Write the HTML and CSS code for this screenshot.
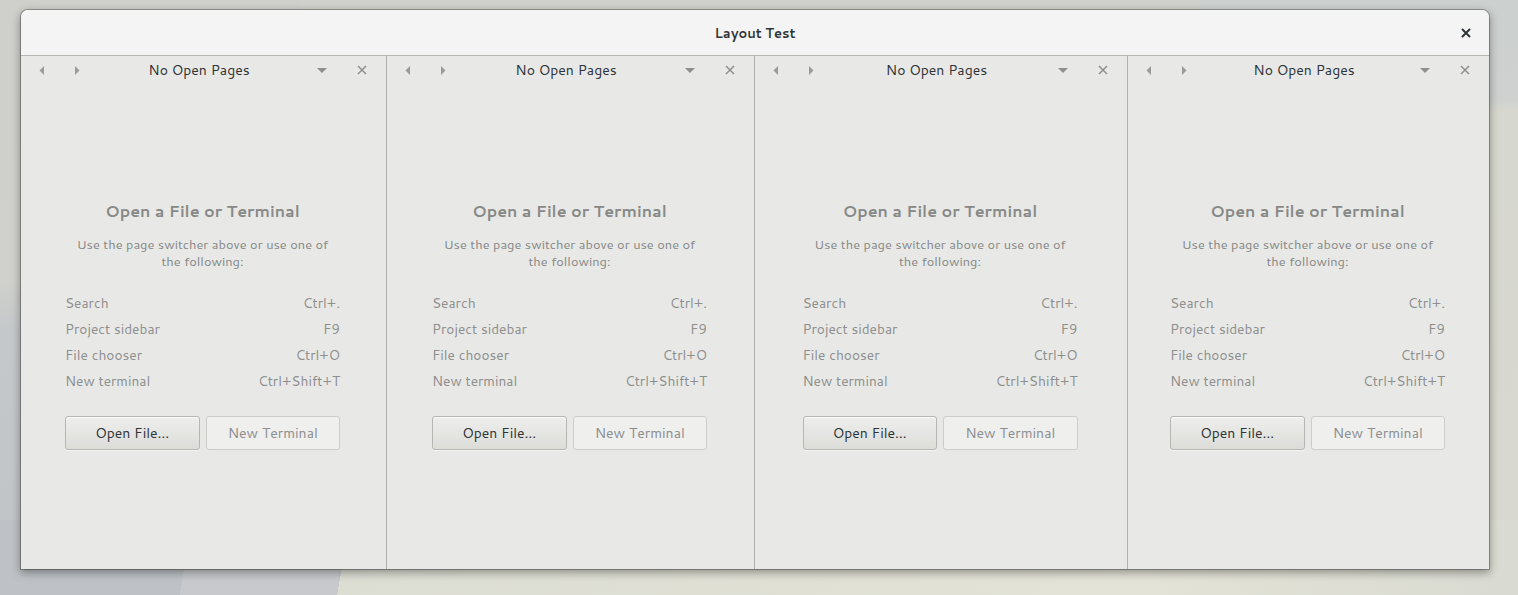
FILE: index.html
```html
<!DOCTYPE html>
<html>
<head>
<meta charset="utf-8">
<title>Layout Test</title>
<link rel="stylesheet" href="styles.css">
</head>
<body>
<div class="desktop">
  <div class="window">
    <header class="titlebar">
      <span class="title">Layout Test</span>
      <button class="win-close" aria-label="Close">
        <svg width="10" height="10" viewBox="0 0 10 10"><path d="M1 1L9 9M9 1L1 9" stroke="#2e3436" stroke-width="2"/></svg>
      </button>
    </header>
    <main class="grid">
      <section class="panel">
        <div class="panel-head">
          <span class="hbtn"><svg width="6" height="9" viewBox="0 0 6 9"><path d="M5 0V9L0.5 4.5Z" fill="#9a9c9c"/></svg></span>
          <span class="hbtn"><svg width="6" height="9" viewBox="0 0 6 9"><path d="M1 0V9L5.5 4.5Z" fill="#9a9c9c"/></svg></span>
          <span class="ptitle">No Open Pages</span>
          <span class="hbtn"><svg width="10" height="5" viewBox="0 0 10 5"><path d="M0 0H10L5 5Z" fill="#8e9090"/></svg></span>
          <span class="hbtn"><svg width="10" height="10" viewBox="0 0 10 10"><path d="M1 1L9 9M9 1L1 9" stroke="#8e9090" stroke-width="1.5"/></svg></span>
        </div>
        <div class="empty">
          <h2 class="etitle">Open a File or Terminal</h2>
          <p class="esub">Use the page switcher above or use one of the following:</p>
          <dl class="keys">
            <div class="krow"><dt>Search</dt><dd>Ctrl+.</dd></div>
            <div class="krow"><dt>Project sidebar</dt><dd>F9</dd></div>
            <div class="krow"><dt>File chooser</dt><dd>Ctrl+O</dd></div>
            <div class="krow"><dt>New terminal</dt><dd>Ctrl+Shift+T</dd></div>
          </dl>
          <div class="actions">
            <button class="btn">Open File…</button>
            <button class="btn btn-disabled">New Terminal</button>
          </div>
        </div>
      </section>
      <section class="panel">
        <div class="panel-head">
          <span class="hbtn"><svg width="6" height="9" viewBox="0 0 6 9"><path d="M5 0V9L0.5 4.5Z" fill="#9a9c9c"/></svg></span>
          <span class="hbtn"><svg width="6" height="9" viewBox="0 0 6 9"><path d="M1 0V9L5.5 4.5Z" fill="#9a9c9c"/></svg></span>
          <span class="ptitle">No Open Pages</span>
          <span class="hbtn"><svg width="10" height="5" viewBox="0 0 10 5"><path d="M0 0H10L5 5Z" fill="#8e9090"/></svg></span>
          <span class="hbtn"><svg width="10" height="10" viewBox="0 0 10 10"><path d="M1 1L9 9M9 1L1 9" stroke="#8e9090" stroke-width="1.5"/></svg></span>
        </div>
        <div class="empty">
          <h2 class="etitle">Open a File or Terminal</h2>
          <p class="esub">Use the page switcher above or use one of the following:</p>
          <dl class="keys">
            <div class="krow"><dt>Search</dt><dd>Ctrl+.</dd></div>
            <div class="krow"><dt>Project sidebar</dt><dd>F9</dd></div>
            <div class="krow"><dt>File chooser</dt><dd>Ctrl+O</dd></div>
            <div class="krow"><dt>New terminal</dt><dd>Ctrl+Shift+T</dd></div>
          </dl>
          <div class="actions">
            <button class="btn">Open File…</button>
            <button class="btn btn-disabled">New Terminal</button>
          </div>
        </div>
      </section>
      <section class="panel">
        <div class="panel-head">
          <span class="hbtn"><svg width="6" height="9" viewBox="0 0 6 9"><path d="M5 0V9L0.5 4.5Z" fill="#9a9c9c"/></svg></span>
          <span class="hbtn"><svg width="6" height="9" viewBox="0 0 6 9"><path d="M1 0V9L5.5 4.5Z" fill="#9a9c9c"/></svg></span>
          <span class="ptitle">No Open Pages</span>
          <span class="hbtn"><svg width="10" height="5" viewBox="0 0 10 5"><path d="M0 0H10L5 5Z" fill="#8e9090"/></svg></span>
          <span class="hbtn"><svg width="10" height="10" viewBox="0 0 10 10"><path d="M1 1L9 9M9 1L1 9" stroke="#8e9090" stroke-width="1.5"/></svg></span>
        </div>
        <div class="empty">
          <h2 class="etitle">Open a File or Terminal</h2>
          <p class="esub">Use the page switcher above or use one of the following:</p>
          <dl class="keys">
            <div class="krow"><dt>Search</dt><dd>Ctrl+.</dd></div>
            <div class="krow"><dt>Project sidebar</dt><dd>F9</dd></div>
            <div class="krow"><dt>File chooser</dt><dd>Ctrl+O</dd></div>
            <div class="krow"><dt>New terminal</dt><dd>Ctrl+Shift+T</dd></div>
          </dl>
          <div class="actions">
            <button class="btn">Open File…</button>
            <button class="btn btn-disabled">New Terminal</button>
          </div>
        </div>
      </section>
      <section class="panel">
        <div class="panel-head">
          <span class="hbtn"><svg width="6" height="9" viewBox="0 0 6 9"><path d="M5 0V9L0.5 4.5Z" fill="#9a9c9c"/></svg></span>
          <span class="hbtn"><svg width="6" height="9" viewBox="0 0 6 9"><path d="M1 0V9L5.5 4.5Z" fill="#9a9c9c"/></svg></span>
          <span class="ptitle">No Open Pages</span>
          <span class="hbtn"><svg width="10" height="5" viewBox="0 0 10 5"><path d="M0 0H10L5 5Z" fill="#8e9090"/></svg></span>
          <span class="hbtn"><svg width="10" height="10" viewBox="0 0 10 10"><path d="M1 1L9 9M9 1L1 9" stroke="#8e9090" stroke-width="1.5"/></svg></span>
        </div>
        <div class="empty">
          <h2 class="etitle">Open a File or Terminal</h2>
          <p class="esub">Use the page switcher above or use one of the following:</p>
          <dl class="keys">
            <div class="krow"><dt>Search</dt><dd>Ctrl+.</dd></div>
            <div class="krow"><dt>Project sidebar</dt><dd>F9</dd></div>
            <div class="krow"><dt>File chooser</dt><dd>Ctrl+O</dd></div>
            <div class="krow"><dt>New terminal</dt><dd>Ctrl+Shift+T</dd></div>
          </dl>
          <div class="actions">
            <button class="btn">Open File…</button>
            <button class="btn btn-disabled">New Terminal</button>
          </div>
        </div>
      </section>
    </main>
  </div>
</div>
</body>
</html>
```
FILE: styles.css
```css
* { box-sizing: border-box; }
html, body { margin: 0; padding: 0; }
body {
  width: 1518px;
  height: 595px;
  overflow: hidden;
  font-family: Cantarell, "Open Sans", "Noto Sans", sans-serif;
}
.desktop {
  width: 1518px;
  height: 595px;
  padding: 10px 0 0 21px;
  background:
    linear-gradient(100deg, #bec2c6 0 190px, #c7c9cc 190px 345px, #dcddd3 345px, #e3e3d7 75%, #d9dad1 100%) 0 520px / 100% 75px no-repeat,
    linear-gradient(to bottom, #cfd0cb 0, #d0d1cc 280px, #c5c8ca 330px, #c2c5c8 520px) 0 0 / 300px 100% no-repeat,
    linear-gradient(to bottom, #ccd0cf 0, #ced1cf 100px, #d6d7cf 110px, #d8d8d0 595px) 1200px 0 / 318px 100% no-repeat,
    #d0d1cc;
}
.window {
  width: 1468px;
  height: 559px;
  border-radius: 7px 7px 0 0;
  background: #e8e8e7;
  box-shadow: 0 0 0 1px rgba(0,0,0,0.28), 0 3px 9px 1px rgba(0,0,0,0.35);
  display: flex;
  flex-direction: column;
  overflow: hidden;
}
.titlebar {
  height: 46px;
  flex: none;
  background: #f4f4f4;
  border-bottom: 1px solid #b6b6b3;
  display: flex;
  align-items: center;
  justify-content: center;
  position: relative;
}
.title {
  font-size: 13px;
  font-weight: 600;
  color: #2e3436;
  margin-top: 1px;
}
.win-close {
  position: absolute;
  right: 13px;
  top: 13px;
  width: 20px;
  height: 20px;
  padding: 0;
  border: 0;
  background: none;
  display: flex;
  align-items: center;
  justify-content: center;
}
.grid {
  flex: 1;
  display: grid;
  grid-template-columns: 365px 368px 373px 362px;
}
.panel {
  display: flex;
  flex-direction: column;
  align-items: center;
  background: #e8e8e7;
}
.panel + .panel { border-left: 1px solid #b0b0ad; }
.panel-head {
  width: 100%;
  height: 28px;
  display: flex;
  align-items: center;
  padding: 0 7px 0 3px;
}
.hbtn {
  width: 35px;
  height: 28px;
  display: flex;
  align-items: center;
  justify-content: center;
  flex: none;
}
.hbtn:nth-child(4) { width: 45px; }
.ptitle {
  flex: 1;
  text-align: center;
  font-size: 14px;
  color: #2e3436;
  padding-left: 5px;
}
.empty {
  width: 275px;
  margin-top: 115px;
  margin-right: 2px;
  display: flex;
  flex-direction: column;
  align-items: stretch;
}
.etitle {
  margin: 0;
  text-align: center;
  font-size: 16px;
  font-weight: 700;
  color: #878986;
  line-height: 24px;
}
.esub {
  margin: 13px 6px 0;
  text-align: center;
  font-size: 12.8px;
  line-height: 17px;
  color: #868886;
}
.keys {
  margin: 24px 0 0;
  color: #8d8f8d;
  font-size: 13.7px;
}
.krow {
  display: flex;
  justify-content: space-between;
  height: 26px;
  line-height: 18px;
}
.krow dt, .krow dd { margin: 0; }
.actions {
  margin-top: 18px;
  display: flex;
  gap: 6px;
}
.btn {
  flex: 1;
  height: 34px;
  font-family: inherit;
  font-size: 14px;
  color: #2e3436;
  border: 1px solid #b6b6b3;
  border-radius: 3px;
  background: linear-gradient(to bottom, #eeeeec, #dcdcd9);
  box-shadow: inset 0 1px rgba(255,255,255,0.7), 0 1px rgba(255,255,255,0.5);
}
.btn-disabled {
  color: #8b8e8f;
  border-color: #cdcdc9;
  background: #efefee;
  box-shadow: none;
}
```
